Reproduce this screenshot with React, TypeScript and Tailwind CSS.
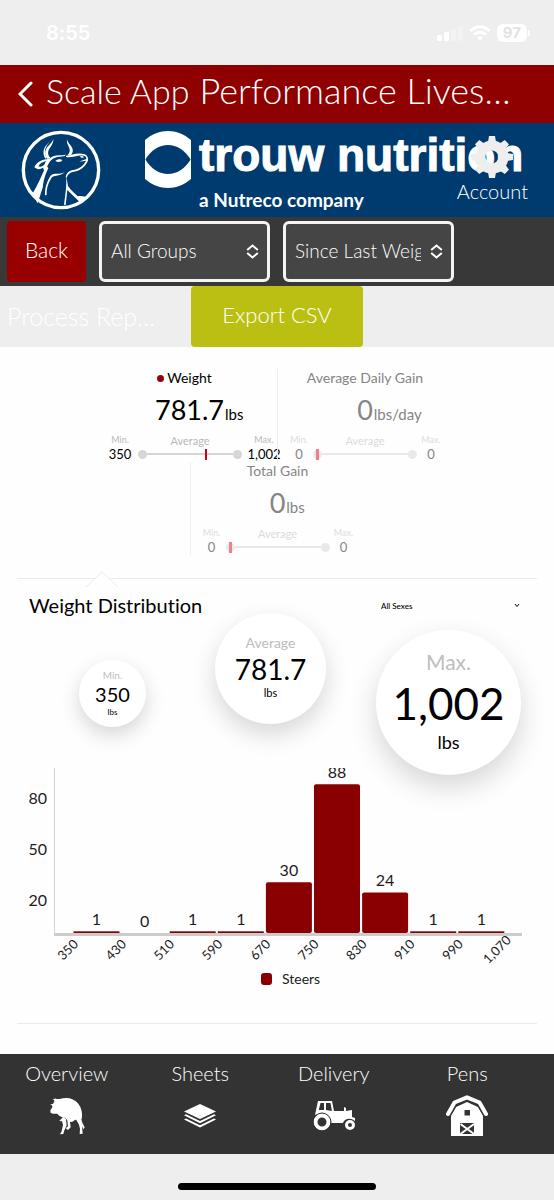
import type { ReactNode } from 'react';

type StatProps = {
  title: string;
  value: string;
  unit: string;
  min: string;
  max: string;
  position: number;
  active?: boolean;
};

type Bin = { start: string; count: number };

const BINS: Bin[] = [
  { start: '350', count: 1 },
  { start: '430', count: 0 },
  { start: '510', count: 1 },
  { start: '590', count: 1 },
  { start: '670', count: 30 },
  { start: '750', count: 88 },
  { start: '830', count: 24 },
  { start: '910', count: 1 },
  { start: '990', count: 1 },
];

const TICKS = [...BINS.map((bin) => bin.start), '1,070'];

const STATS: StatProps[] = [
  { title: 'Weight', value: '781.7', unit: 'lbs', min: '350', max: '1,002', position: 64, active: true },
  { title: 'Average Daily Gain', value: '0', unit: 'lbs/day', min: '0', max: '0', position: 3 },
  { title: 'Total Gain', value: '0', unit: 'lbs', min: '0', max: '0', position: 3 },
];

function StatusBar() {
  return (
    <div className="flex h-[65px] items-center justify-between pl-[46px] pr-6 font-['Inter',sans-serif] text-white">
      <span className="text-xl font-semibold">8:55</span>
      <div className="flex items-center gap-1.5">
        <svg width="26" height="16" viewBox="0 0 26 16" fill="currentColor">
          <rect x="0" y="10" width="5" height="6" rx="1.5" />
          <rect x="7" y="7" width="5" height="9" rx="1.5" />
          <rect x="14" y="4" width="5" height="12" rx="1.5" opacity="0.3" />
          <rect x="21" y="1" width="5" height="15" rx="1.5" opacity="0.3" />
        </svg>
        <svg width="22" height="16" viewBox="0 0 22 16" fill="none" stroke="currentColor" strokeWidth="3">
          <path d="M1.5 6C7 .3 15 .3 20.500 6" />
          <path d="M5 9.800c3.500-3.500 8.500-3.500 12 0" />
          <path d="M11 16l-3-3.500c1.700-1.600 4.300-1.600 6 0z" fill="currentColor" stroke="none" />
        </svg>
        <div className="flex items-center gap-px">
          <span className="rounded-md bg-white px-1.5 text-[15px] leading-[18px] font-bold text-[#e4e4e4]">97</span>
          <span className="h-1.5 w-0.5 rounded-r bg-white" />
        </div>
      </div>
    </div>
  );
}

function BullLogo() {
  return (
    <svg width="80" height="80" viewBox="8 6 240 240" fill="white">
      <circle cx="128" cy="126" r="113" fill="none" stroke="white" strokeWidth="10" />
      {/* horns */}
      <path d="M105 33c1 14-9 24-14 33-4 9-1 17 5 24l-9 3c-8-10-9-21-3-31 6-11 17-16 21-29z" />
      <path d="M96 38c-6 9-15 18-16 29-1 9 1 17 5 23l-4 2c-6-9-7-20-4-29 3-10 13-16 19-25z" />
      <path d="M146 34c1 9 12 17 16 27 3 8 1 15-4 20h-10c6-6 8-12 5-20-3-9-9-16-7-27z" />
      {/* ear and poll */}
      <path d="M48 118c8-17 23-24 42-25l14-8c13-5 25-2 38-5l-2 4c-15 3-24 1-36 8-14 8-17 27-26 37l-4-10c-9 6-18 6-26-1zm12-3c7 2 13 1 19-6 1-5 3-8 6-10-11 2-20 6-25 16z" fillRule="evenodd" />
      {/* eye */}
      <path d="M111 99c7-7 17-6 21-2-3 6-13 7-21 2z" />
      {/* muzzle */}
      <path d="M143 83c16 0 34-11 56-4 8 3 11 11 10 19-9 18-23 31-42 33-14 2-19 9-22 18l-3-1c2-14 10-20 23-22 20-4 30-13 38-28l-20 3c9-4 17-6 21-8 0-6-2-9-8-10-19-4-34 8-53 4z" />
      <path d="M184 86c6-4 12-2 12 3-4 0-8 0-12-3z" />
      {/* neck and shoulder */}
      <path d="M84 112l6 9c-10 20-14 35-17 58l-15 47-16-28c15-24 28-55 42-86z" />
      <path d="M139 133c-17 14-34 7-41 19-10 16-14 32-13 49l-5 1c-1-24 7-43 16-58 11-12 27-2 43-11z" />
      <path d="M144 145l5 29c10 14 20 22 29 31 9-3 21 0 31 4l-21 17-41-40-5 45-5-1c4-28 8-55 7-85z" />
    </svg>
  );
}

function EyeLogo() {
  return (
    <svg width="46" height="60" viewBox="0 0 46 60" fill="white">
      <path d="M0 10C14-2 32-2 46 10V30C34 10 12 10 0 30z" />
      <path d="M0 29C12 49 34 49 46 29V49C32 61 14 61 0 49z" />
    </svg>
  );
}

function GearIcon() {
  return (
    <svg width="44" height="44" viewBox="0 0 44 44" fill="none" stroke="#eeeeee">
      <circle cx="22" cy="22" r="11.500" strokeWidth="10" />
      {[0, 45, 90, 135, 180, 225, 270, 315].map((angle) => (
        <path key={angle} d="M18 7l1-6h6l1 6z" fill="#eeeeee" stroke="none" transform={`rotate(${angle} 22 22)`} />
      ))}
    </svg>
  );
}

function Brand() {
  return (
    <div className="relative flex h-[94px] items-start bg-[#003b70] pt-[7px] pl-[21px] text-white">
      <BullLogo />
      <div className="ml-11">
        <EyeLogo />
      </div>
      <div className="ml-2 whitespace-nowrap">
        <p className="font-['Liberation_Sans',sans-serif] text-[46px] leading-[50px] font-bold [-webkit-text-stroke:1px_white]">
          trouw nutrition
        </p>
        <p className="pt-2 text-[19px] leading-6 font-bold">a Nutreco company</p>
      </div>
      <button className="absolute top-3 right-[26px] flex flex-col items-center text-xl leading-6 font-light">
        <GearIcon />
        Account
      </button>
    </div>
  );
}

function ToolbarSelect({ label, value }: { label: string; value: string }) {
  return (
    <div className="relative w-[171px]">
      <select
        aria-label={label}
        className="h-[61px] w-full appearance-none rounded-md border-3 border-[#f4f4f4] bg-[#454545] pr-[30px] pl-[9px] text-[19px] font-light text-white"
      >
        <option>{value}</option>
      </select>
      <svg
        className="pointer-events-none absolute top-[23px] right-[11px]"
        width="13"
        height="15"
        viewBox="0 0 12 15"
        fill="none"
        stroke="white"
        strokeWidth="2"
      >
        <path d="M.7 6L6 1.500 11.300 6M.7 9L6 13.500 11.300 9" />
      </svg>
    </div>
  );
}

function Stat({ title, value, unit, min, max, position, active }: StatProps) {
  const limit = active ? 'text-[13px] leading-5 text-black' : 'text-[13px] leading-5 text-[#858585]';

  return (
    <div className={active ? 'h-[93px] w-[175px]' : 'h-[93px] w-[175px] border-l border-[#eeeeee] text-[#858585]'}>
      <div className="flex justify-center text-sm leading-[18px]">
        <div className="relative">
          {active && <span className="absolute top-1.5 -left-2.5 size-[7px] rounded-full bg-[#9b0008]" />}
          {title}
        </div>
      </div>
      <div className="flex h-12 items-baseline justify-center gap-px pt-[5px]">
        <span className="w-0" />
        <span className="text-[27px] leading-9">{value}</span>
        <span className="w-0 text-[15px] whitespace-nowrap">{unit}</span>
      </div>
      <div className={active ? 'flex text-[#b9b9b9]' : 'flex justify-center text-[#dcdcdc]'}>
        <div className={active ? 'w-9 shrink-0 text-center' : 'w-7 text-center'}>
          <p className="text-[9px] leading-[9px]">Min.</p>
          <p className={limit}>{min}</p>
        </div>
        <div className="w-[104px] shrink-0">
          <p className="text-center text-[11px] leading-[11px]">Average</p>
          <div className="flex h-4 items-center">
            <div className={active ? 'relative flex w-full items-center text-[#d6d6d6]' : 'relative flex w-full items-center text-[#e9e9e9]'}>
              <span className="size-[9px] rounded-full bg-current" />
              <span className="h-0.5 grow bg-current" />
              <span className="size-[9px] rounded-full bg-current" />
              <span
                className={active ? 'absolute h-[11px] w-0.5 bg-[#d0021b]' : 'absolute h-[11px] w-[3px] bg-[#ee7f8c]'}
                style={{ left: `${position}%` }}
              />
            </div>
          </div>
        </div>
        <div className={active ? 'w-11 shrink-0 text-center' : 'w-7 text-center'}>
          <p className="text-[9px] leading-[9px]">Max.</p>
          <p className={limit}>{max}</p>
        </div>
      </div>
    </div>
  );
}

function DistributionChart() {
  const base = 166;
  return (
    <svg className="block h-auto w-full" viewBox="0 0 554 226" fontSize="16" fill="#1c1c1c">
      <path d="M54.500 1v167" stroke="#d2d2d2" />
      <path d="M54 167.500h468" stroke="#cccccc" strokeWidth="3" />
      <text x="47" y="37" textAnchor="end">80</text>
      <text x="47" y="88" textAnchor="end">50</text>
      <text x="47" y="139" textAnchor="end">20</text>
      <clipPath id="plot">
        <rect x="54" y="1" width="468" height="170" />
      </clipPath>
      <g clipPath="url(#plot)">
        {BINS.map((bin, i) => {
          const left = 73.5 + i * 48.1;
          const height = bin.count * 1.69;
          return (
            <g key={bin.start}>
              {bin.count > 0 && (
                <rect x={left} y={base - height} width="46" height={height} rx={bin.count > 2 ? 2 : 0} fill="#8a0000" />
              )}
              <text x={left + 23} y={base - height - 6} textAnchor="middle">
                {bin.count}
              </text>
            </g>
          );
        })}
      </g>
      {TICKS.map((tick, i) => (
        <text
          key={tick}
          fontSize="13"
          textAnchor="end"
          transform={`translate(${79 + i * 48.1} ${tick === '1,070' ? 174 : 178}) rotate(-45)`}
        >
          {tick}
        </text>
      ))}
      <rect x="261" y="206" width="11" height="12" rx="3" fill="#8a0000" />
      <text x="282" y="217" fontSize="14">Steers</text>
    </svg>
  );
}

function CowIcon() {
  return (
    <svg width="36" height="40" viewBox="14 18 108 120" fill="white">
      {/* body, head and horns */}
      <path d="M29 22c4 5 10 6 17 5 22-7 43-2 56 14 10 13 12 27 11 42l-6 8-14-2-10 7c-9 0-15-7-22-13-10-1-17-5-22-12l-12 0-8-2-1-8 6-9-1-6-6-3 9-1 4-8-1-4-5-2 9-1z" />
      {/* front legs */}
      <path d="M57 80l8 8 2 18-8 18-2 8-10 1 5-9 4-19-3-11-8-1z" />
      <path d="M68 84l8 4 3 24-8 8-7-5 7-6z" />
      {/* hind legs and tail */}
      <path d="M94 86l14-2 4 12 3 35-9 1 1-16-3-12z" />
      <path d="M110 80l4 18 7 14-4 6-6-14z" />
    </svg>
  );
}

function LayersIcon() {
  return (
    <svg width="32" height="24" viewBox="0 0 32 24" fill="white">
      <path d="M16 0l16 7.500L16 15 0 7.500z" />
      <path d="M0 11.300l2-1L16 17l14-6.700 2 1L16 19.300z" />
      <path d="M0 15.500l2-1L16 21.200l14-6.700 2 1L16 23.600z" />
    </svg>
  );
}

function TractorIcon() {
  return (
    <svg width="42" height="30" viewBox="0 0 42 30" fill="white">
      <path d="M5 0h14l2 10h10V6l2 1v3l6-1v7l3 1v3c-5-4-11-2-12 2H18c-1-7-6-11-13-9l-3 1z" />
      <path d="M7.500 2H11v7H5.800zM13 2h4.500l1.400 8-5.900-1z" fill="#333333" />
      <circle cx="9" cy="21" r="6.500" fill="none" stroke="white" strokeWidth="4" />
      <circle cx="9" cy="21" r="9" fill="none" stroke="#333333" />
      <circle cx="37" cy="24" r="3.500" fill="none" stroke="white" strokeWidth="3" />
    </svg>
  );
}

function BarnIcon() {
  return (
    <svg width="42" height="42" viewBox="0 0 42 42" fill="none">
      <path d="M5 41V20l5-8 11-5 11 5 5 8v21z" fill="white" />
      <path d="M2 19l6.500-11.500L21 2l12.500 5.500L40 19" stroke="#333333" strokeWidth="7" />
      <path d="M2 19l6.500-11.500L21 2.300l12.500 5.200L40 19" stroke="white" strokeWidth="4" strokeLinecap="round" strokeLinejoin="round" />
      <path d="M18.500 15h5.500v5.500h-5.500zM14 28h14v11H14z" fill="#333333" />
      <path d="M14.500 29L28 39M28 29L14.500 39" stroke="white" strokeWidth="2" />
    </svg>
  );
}

function NavItem({ label, children }: { label: string; children: ReactNode }) {
  return (
    <button className="flex flex-1 flex-col items-center gap-1.5 pt-[5px] text-xl leading-7 font-light text-white">
      {label}
      <span className="flex h-[46px] items-center">{children}</span>
    </button>
  );
}

export default function App() {
  return (
    <div className="flex min-h-screen flex-col bg-[#eeeeee] font-['Lato',sans-serif] text-black [font-variant-ligatures:none]">
      <StatusBar />
      <header className="flex h-[58px] items-center gap-3 bg-[#8f0000] pl-[18px] text-white">
        <button aria-label="Go back">
          <svg width="16" height="28" viewBox="0 0 16 28" fill="none" stroke="white" strokeWidth="3" strokeLinecap="round">
            <path d="M13 3L2 14l11 11" />
          </svg>
        </button>
        <h1 className="flex items-baseline gap-2.5 pb-2 font-light whitespace-nowrap">
          <span className="text-[34px]">Scale App</span>
          <span className="text-[36px]">Performance Lives…</span>
        </h1>
      </header>
      <Brand />
      <div className="flex h-[69px] items-start gap-[13px] bg-[#383838] pt-1 pl-[7px]">
        <button className="h-[61px] w-[79px] rounded-sm bg-[#980000] pb-1 text-[21px] font-light text-white">Back</button>
        <ToolbarSelect label="Group" value="All Groups" />
        <ToolbarSelect label="Period" value="Since Last Weigh" />
      </div>
      <div className="flex h-[61px] items-center pl-[7px] text-white">
        <span className="w-[184px] text-[25px] font-light">Process Rep…</span>
        <button className="h-[61px] w-[172px] rounded-sm bg-[#babf12] pb-1 text-[22px] font-light">Export CSV</button>
      </div>

      <main className="grow bg-[#fefefe] pt-[22px]">
        <div className="flex flex-wrap justify-center px-[102px]">
          {STATS.map((stat) => (
            <Stat key={stat.title} {...stat} />
          ))}
        </div>

        <section className="pt-4">
          <svg className="block h-auto w-full" viewBox="0 0 554 16" fill="none" stroke="#eaeaea">
            <path d="M17 7.500h78M109 7.500h428M86 16L102 .7 118 16" />
          </svg>
          <div className="flex h-[34px] items-start justify-between pt-1 pr-[34px] pl-[29px]">
            <h2 className="text-xl leading-7">Weight Distribution</h2>
            <div className="relative w-[139px]">
              <select aria-label="Sex" className="w-full appearance-none text-[8px] font-medium">
                <option>All Sexes</option>
              </select>
              <svg className="pointer-events-none absolute top-3 right-0" width="6" height="5" viewBox="0 0 6 5" fill="none" stroke="black">
                <path d="M1 1l2 2.500L5 1" />
              </svg>
            </div>
          </div>

          <div className="flex h-[146px] items-start pl-[79px]">
            <div className="mt-[39px] flex size-[67px] shrink-0 flex-col items-center justify-center rounded-full bg-white pb-0.5 shadow-[0_8px_20px_rgba(0,0,0,0.16)]">
              <span className="text-[10px] leading-[10px] text-[#bdbdbd]">Min.</span>
              <span className="text-xl leading-7">350</span>
              <span className="text-[8px] leading-[8px]">lbs</span>
            </div>
            <div className="-mt-2 ml-[69px] flex size-[111px] shrink-0 flex-col items-center justify-center rounded-full bg-white pb-1 shadow-[0_10px_24px_rgba(0,0,0,0.16)]">
              <span className="text-sm leading-4 text-[#bdbdbd]">Average</span>
              <span className="text-[28px] leading-9">781.7</span>
              <span className="text-[11px] leading-3">lbs</span>
            </div>
            <div className="mt-[9px] ml-[50px] flex size-[145px] shrink-0 flex-col items-center justify-center rounded-full bg-white pb-1 shadow-[0_12px_28px_rgba(0,0,0,0.16)]">
              <span className="text-[21px] leading-6 text-[#bdbdbd]">Max.</span>
              <span className="text-[44px] leading-[58px]">1,002</span>
              <span className="text-lg leading-5">lbs</span>
            </div>
          </div>

          <DistributionChart />
          <hr className="mx-[17px] mt-[30px] border-[#eaeaea]" />
        </section>
      </main>

      <nav className="flex h-[100px] bg-[#333333] pr-5">
        <NavItem label="Overview"><CowIcon /></NavItem>
        <NavItem label="Sheets"><LayersIcon /></NavItem>
        <NavItem label="Delivery"><TractorIcon /></NavItem>
        <NavItem label="Pens"><BarnIcon /></NavItem>
      </nav>
      <div className="flex h-[46px] justify-center pt-[29px]">
        <div className="h-[7px] w-[198px] rounded-full bg-black" />
      </div>
    </div>
  );
}
